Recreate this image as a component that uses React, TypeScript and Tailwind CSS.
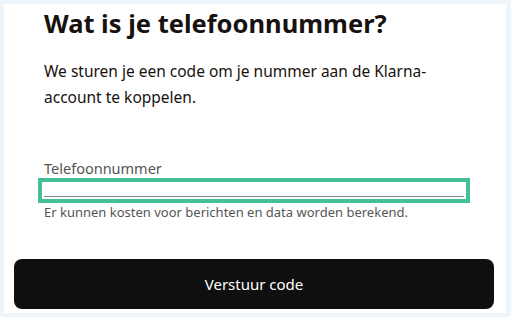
export default function App() {
  return (
    <div className="h-[317px] w-[511px] bg-[#edf4fa] pt-1 pl-1 pr-[5px] pb-[4px] font-['Noto_Sans',sans-serif]">
      <div className="flex h-full flex-col bg-white">
        <div className="pl-10 pr-9 pt-[3px]">
          <h1 className="text-[25.5px] font-bold leading-[32px] text-[#17120f]">Wat is je telefoonnummer?</h1>
          <p className="mt-[19px] text-[15.5px] leading-[26px] text-[#17120f]">
            We sturen je een code om je nummer aan de Klarna-account te koppelen.
          </p>
        </div>
        <div className="mt-[49px] pl-[34px] pr-9">
          <label className="block pl-[6px] text-[14.5px] leading-[19px] text-[#555]">Telefoonnummer</label>
          <div className="h-[25px] border-4 border-[#44bf98] px-[2px] pb-[2px]">
            <div className="h-full border-b border-[#8a8a8a]"></div>
          </div>
          <p className="pl-[6px] text-[13px] leading-[18px] text-[#555]">Er kunnen kosten voor berichten en data worden berekend.</p>
        </div>
        <button className="ml-[10px] mr-[12px] mt-auto mb-[4px] h-[50px] rounded-[8px] bg-[#0f0f0f] text-[15px] text-white">
          Verstuur code
        </button>
      </div>
    </div>
  );
}
